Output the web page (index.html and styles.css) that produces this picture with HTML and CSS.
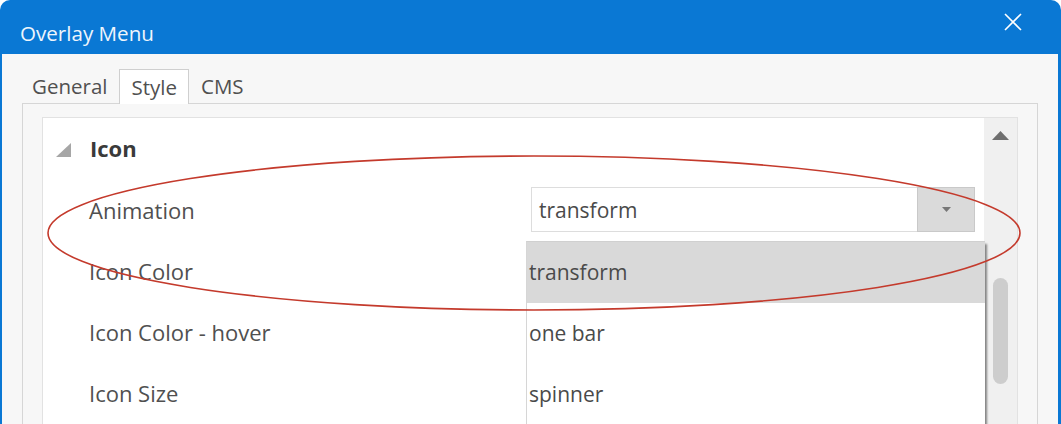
FILE: index.html
```html
<!DOCTYPE html>
<html>
<head>
<meta charset="utf-8">
<link rel="stylesheet" href="styles.css">
</head>
<body>
<div class="window">
  <div class="titlebar">
    <span class="title">Overlay Menu</span>
    <svg class="close" width="18" height="18" viewBox="0 0 18 18"><path d="M1 1L17 17M17 1L1 17" stroke="#fff" stroke-width="1.6" fill="none"/></svg>
  </div>
  <div class="client">
    <div class="tabs">
      <div class="tab">General</div>
      <div class="tab active">Style</div>
      <div class="tab last">CMS</div>
    </div>
    <div class="panel">
      <div class="grid">
        <div class="rows">
          <div class="cat">
            <svg class="expander" width="16" height="14" viewBox="0 0 16 14"><path d="M16 0L16 14L1 14Z" fill="#a6a6a6"/></svg>
            <span class="cat-name">Icon</span>
          </div>
          <div class="row">
            <span class="label">Animation</span>
            <div class="combo">
              <span class="combo-text">transform</span>
              <span class="combo-btn"><svg width="9" height="5" viewBox="0 0 9 5"><path d="M0 0H9L4.5 5Z" fill="#777"/></svg></span>
            </div>
          </div>
          <div class="row"><span class="label">Icon Color</span></div>
          <div class="row"><span class="label">Icon Color - hover</span></div>
          <div class="row"><span class="label">Icon Size</span></div>
        </div>
        <div class="scrollbar">
          <svg class="up" width="17" height="9" viewBox="0 0 17 9"><path d="M0 9H17L8.5 0Z" fill="#6e6e6e"/></svg>
          <div class="thumb"></div>
        </div>
      </div>
    </div>
  </div>
  <div class="dropdown">
    <div class="item selected">transform</div>
    <div class="item">one bar</div>
    <div class="item">spinner</div>
  </div>
  <svg class="mark" width="1061" height="424" viewBox="0 0 1061 424"><ellipse cx="534" cy="233" rx="486" ry="77" fill="none" stroke="#c43a2c" stroke-width="1.6"/></svg>
</div>
</body>
</html>
```
FILE: styles.css
```css
html, body {
  margin: 0;
  padding: 0;
  background: #ffffff;
}
body {
  font-family: "Open Sans", "Noto Sans", sans-serif;
  color: #4e4e4e;
}
.window {
  position: relative;
  width: 1061px;
  height: 424px;
  overflow: hidden;
  box-sizing: border-box;
  background: #0a78d4;
  border-radius: 10px 10px 0 0;
  padding: 0 3px 0 2px;
  display: flex;
  flex-direction: column;
}
.titlebar {
  height: 54px;
  flex: none;
  display: flex;
  align-items: center;
  justify-content: space-between;
  padding: 0 36px 0 18px;
}
.title {
  color: #eef5fc;
  font-size: 20.6px;
  margin-top: 12px;
}
.close {
  margin-top: -10px;
}
.client {
  flex: 1;
  background: #f7f7f7;
  padding: 0 20px;
  display: flex;
  flex-direction: column;
}
.tabs {
  display: flex;
  margin-top: 15px;
  height: 35px;
  align-items: stretch;
  position: relative;
  z-index: 1;
  margin-bottom: -1px;
}
.tab {
  display: flex;
  align-items: center;
  padding: 0 10px 2px 10px;
  font-size: 20.5px;
  color: #505050;
}
.tab:first-child {
  margin-right: 2px;
}
.tab.last {
  padding-left: 12px;
}
.tab.active {
  background: #ffffff;
  border: 1px solid #cfcfcf;
  border-bottom: none;
  padding: 0 11px 1px 11px;
}
.panel {
  flex: 1;
  border: 1px solid #d6d6d6;
  border-bottom: none;
  padding: 13px 19px 0 19px;
  display: flex;
}
.grid {
  flex: 1;
  background: #ffffff;
  border: 1px solid #e2e2e2;
  border-bottom: none;
  display: flex;
}
.rows {
  flex: 1;
}
.cat {
  height: 63px;
  display: flex;
  align-items: center;
  padding-left: 12px;
}
.cat-name {
  font-weight: bold;
  font-size: 22px;
  color: #3a3a3a;
  margin-left: 19px;
  margin-top: -3px;
}
.row {
  height: 61px;
  display: flex;
  align-items: center;
  padding-left: 46px;
}
.label {
  width: 442px;
  font-size: 22px;
  color: #505050;
  margin-top: -4px;
}
.combo {
  width: 442px;
  height: 43px;
  border: 1px solid #dddddd;
  display: flex;
  align-items: center;
  margin-top: -4px;
}
.combo-text {
  flex: 1;
  padding-left: 7px;
  font-size: 21px;
  color: #4a4a4a;
}
.combo-btn {
  width: 58px;
  height: 45px;
  margin: -1px -1px -1px 0;
  box-sizing: border-box;
  background: #dadada;
  border: 1px solid #c9c9c9;
  display: flex;
  align-items: center;
  justify-content: center;
}
.scrollbar {
  width: 33px;
  background: #f0f0f0;
  display: flex;
  flex-direction: column;
  align-items: center;
}
.up {
  margin-top: 13px;
}
.thumb {
  width: 15px;
  height: 106px;
  border-radius: 8px;
  background: #cdcdcd;
  margin-top: 138px;
}
.dropdown {
  position: absolute;
  left: 526px;
  top: 241px;
  width: 458px;
  height: 200px;
  background: #ffffff;
  border-left: 1px solid #d6d6d6;
  border-top: 1px solid #d0d0d0;
  box-shadow: 2px 3px 2px rgba(0, 0, 0, 0.45);
}
.item {
  height: 61px;
  display: flex;
  align-items: center;
  padding-left: 2px;
  padding-bottom: 2px;
  box-sizing: border-box;
  font-size: 21px;
  color: #4a4a4a;
}
.item.selected {
  background: #d9d9d9;
}
.mark {
  position: absolute;
  left: 0;
  top: 0;
  pointer-events: none;
}
```
